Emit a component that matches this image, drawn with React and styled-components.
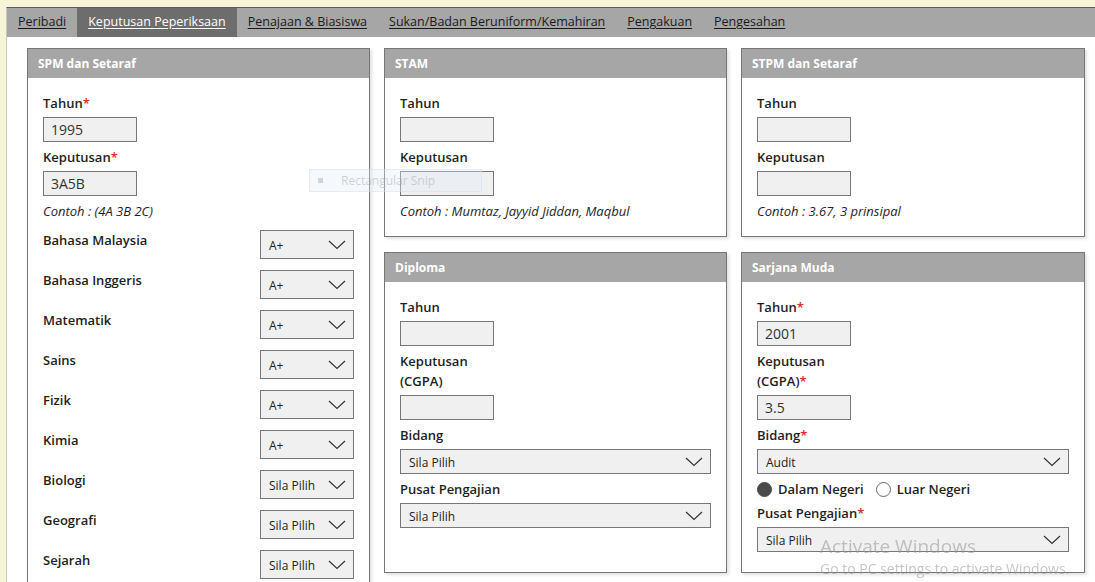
import React from 'react';
import styled, { createGlobalStyle } from 'styled-components';

const GlobalStyle = createGlobalStyle`
    html, body {
        margin: 0;
        padding: 0;
        background: #f7f5d8;
        overflow: hidden;
        font-family: "Open Sans", "Liberation Sans", sans-serif;
    }
`;

const tabs = [
    'Peribadi',
    'Keputusan Peperiksaan',
    'Penajaan & Biasiswa',
    'Sukan/Badan Beruniform/Kemahiran',
    'Pengakuan',
    'Pengesahan',
];

const subjects = [
    ['Bahasa Malaysia', 'A+'],
    ['Bahasa Inggeris', 'A+'],
    ['Matematik', 'A+'],
    ['Sains', 'A+'],
    ['Fizik', 'A+'],
    ['Kimia', 'A+'],
    ['Biologi', 'Sila Pilih'],
    ['Geografi', 'Sila Pilih'],
    ['Sejarah', 'Sila Pilih'],
];

const Chevron = () => (
    <svg width="18" height="10" viewBox="0 0 18 10">
        <polyline points="1,1 9,8.5 17,1" fill="none" stroke="#333" strokeWidth="1.2" />
    </svg>
);

const Select = ({ value, wide }) => (
    <SelectBox $wide={wide}>
        <span>{value}</span>
        <Chevron />
    </SelectBox>
);

const Label = ({ children, required }) => (
    <FieldLabel>
        {children}
        {required && <Star>*</Star>}
    </FieldLabel>
);

const App = () => {
    return (
        <>
            <GlobalStyle />
            <Frame>
                <TabBar>
                    {tabs.map((t, i) => (
                        <Tab key={t} $active={i === 1}>{t}</Tab>
                    ))}
                </TabBar>
                <Content>
                    <Panel $width="343px">
                        <PanelHeader>SPM dan Setaraf</PanelHeader>
                        <PanelBody>
                            <Label required>Tahun</Label>
                            <TextInput readOnly value="1995" />
                            <Label required>Keputusan</Label>
                            <TextInput readOnly value="3A5B" />
                            <Hint>Contoh : (4A 3B 2C)</Hint>
                            <SubjectList>
                                {subjects.map(([name, grade]) => (
                                    <SubjectRow key={name}>
                                        <FieldLabel>{name}</FieldLabel>
                                        <Select value={grade} />
                                    </SubjectRow>
                                ))}
                            </SubjectList>
                        </PanelBody>
                    </Panel>

                    <RightGrid>
                        <Panel>
                            <PanelHeader>STAM</PanelHeader>
                            <PanelBody>
                                <Label>Tahun</Label>
                                <TextInput readOnly value="" />
                                <Label>Keputusan</Label>
                                <TextInput readOnly value="" />
                                <Hint>Contoh : Mumtaz, Jayyid Jiddan, Maqbul</Hint>
                            </PanelBody>
                        </Panel>
                        <Panel>
                            <PanelHeader>STPM dan Setaraf</PanelHeader>
                            <PanelBody>
                                <Label>Tahun</Label>
                                <TextInput readOnly value="" />
                                <Label>Keputusan</Label>
                                <TextInput readOnly value="" />
                                <Hint>Contoh : 3.67, 3 prinsipal</Hint>
                            </PanelBody>
                        </Panel>
                        <Panel>
                            <PanelHeader>Diploma</PanelHeader>
                            <PanelBody>
                                <Label>Tahun</Label>
                                <TextInput readOnly value="" />
                                <Label>Keputusan<br />(CGPA)</Label>
                                <TextInput readOnly value="" />
                                <Label>Bidang</Label>
                                <Select wide value="Sila Pilih" />
                                <Label>Pusat Pengajian</Label>
                                <Select wide value="Sila Pilih" />
                            </PanelBody>
                        </Panel>
                        <Panel>
                            <PanelHeader>Sarjana Muda</PanelHeader>
                            <PanelBody>
                                <Label required>Tahun</Label>
                                <TextInput readOnly value="2001" />
                                <Label required>Keputusan<br />(CGPA)</Label>
                                <TextInput readOnly value="3.5" />
                                <Label required>Bidang</Label>
                                <Select wide value="Audit" />
                                <RadioRow>
                                    <RadioOption>
                                        <RadioDot $checked />
                                        Dalam Negeri
                                    </RadioOption>
                                    <RadioOption>
                                        <RadioDot />
                                        Luar Negeri
                                    </RadioOption>
                                </RadioRow>
                                <Label required>Pusat Pengajian</Label>
                                <Select wide value="Sila Pilih" />
                            </PanelBody>
                        </Panel>
                    </RightGrid>
                </Content>
            </Frame>

            <SnipGhost>
                <span className="icon" />
                <span>Rectangular Snip</span>
            </SnipGhost>

            <Watermark>
                <div className="big">Activate Windows</div>
                <div className="small">Go to PC settings to activate Windows.</div>
            </Watermark>
        </>
    );
};

export default App;

const Frame = styled.div`
    margin: 7px 0 0 6px;
    min-height: 600px;
    background: #fff;
    border-top: 1px solid #5c5c5c;
    border-left: 1px solid #c9c9c2;
`;

const TabBar = styled.div`
    display: flex;
    height: 29px;
    background: #a6a6a6;
`;

const Tab = styled.a`
    display: block;
    padding: 0 11px;
    line-height: 28px;
    font-size: 12.5px;
    color: ${({ $active }) => ($active ? '#fff' : '#1a1a1a')};
    background: ${({ $active }) => ($active ? '#6d6d6d' : 'transparent')};
    text-decoration: underline;
    text-underline-offset: 2px;
    cursor: pointer;
`;

const Content = styled.div`
    display: flex;
    align-items: flex-start;
    gap: 14px;
    padding: 11px 0 0 20px;
`;

const RightGrid = styled.div`
    display: grid;
    grid-template-columns: 343px 344px;
    column-gap: 14px;
    row-gap: 15px;
`;

const Panel = styled.div`
    box-sizing: border-box;
    width: ${({ $width }) => $width || 'auto'};
    background: #fff;
    border: 1px solid #767676;
    box-shadow: 2px 2px 3px rgba(0, 0, 0, 0.12);
`;

const PanelHeader = styled.div`
    height: 29px;
    line-height: 29px;
    padding-left: 10px;
    background: #a6a6a6;
    color: #fff;
    font-size: 12px;
    font-weight: 700;
`;

const PanelBody = styled.div`
    padding: 15px;
`;

const FieldLabel = styled.div`
    font-size: 13px;
    font-weight: 600;
    line-height: 20px;
    color: #1e1e1e;
    margin-bottom: 4px;
`;

const Star = styled.span`
    color: #e0282a;
`;

const TextInput = styled.input`
    display: block;
    box-sizing: border-box;
    width: 94px;
    height: 25px;
    margin: 0 0 5px;
    padding: 0 7px;
    border: 1px solid #777;
    border-radius: 0;
    background: #f0f0f0;
    font-family: "Open Sans", "Liberation Sans", sans-serif;
    font-size: 14px;
    color: #333;
    outline: none;
`;

const Hint = styled.div`
    font-size: 13px;
    font-style: italic;
    line-height: 20px;
    color: #1e1e1e;
`;

const SubjectList = styled.div`
    margin-top: 9px;
`;

const SubjectRow = styled.div`
    display: flex;
    justify-content: space-between;
    align-items: flex-start;
    height: 30px;
    margin-bottom: 10px;
`;

const SelectBox = styled.div`
    box-sizing: border-box;
    display: flex;
    align-items: center;
    justify-content: space-between;
    width: ${({ $wide }) => ($wide ? '100%' : '94px')};
    height: ${({ $wide }) => ($wide ? '25px' : '29px')};
    margin-bottom: ${({ $wide }) => ($wide ? '5px' : '0')};
    padding: 0 7px 0 8px;
    border: 1px solid #777;
    background: #f0f0f0;
    font-size: 12px;
    color: #222;

    span {
        padding-top: 2px;
    }

    svg {
        flex: none;
    }
`;

const RadioRow = styled.div`
    display: flex;
    align-items: center;
    gap: 12px;
    height: 20px;
    margin-bottom: 4px;
`;

const RadioOption = styled.div`
    display: flex;
    align-items: center;
    gap: 6px;
    font-size: 13px;
    font-weight: 600;
    color: #1e1e1e;
`;

const RadioDot = styled.span`
    box-sizing: border-box;
    width: 15px;
    height: 15px;
    border-radius: 50%;
    border: 1px solid ${({ $checked }) => ($checked ? '#4a4a4a' : '#6a6a6a')};
    background: ${({ $checked }) => ($checked ? '#4a4a4a' : '#fff')};
`;

const SnipGhost = styled.div`
    position: absolute;
    left: 309px;
    top: 169px;
    width: 173px;
    height: 23px;
    display: flex;
    align-items: center;
    gap: 18px;
    padding-left: 8px;
    box-sizing: border-box;
    background: rgba(225, 235, 245, 0.35);
    border: 1px solid rgba(200, 215, 230, 0.35);
    font-size: 12px;
    color: rgba(150, 160, 170, 0.45);

    .icon {
        width: 5px;
        height: 5px;
        background: rgba(150, 160, 170, 0.4);
    }
`;

const Watermark = styled.div`
    position: fixed;
    left: 820px;
    top: 534px;
    color: rgba(150, 150, 150, 0.55);
    pointer-events: none;
    white-space: nowrap;

    .big {
        font-size: 19px;
        line-height: 24px;
    }

    .small {
        font-size: 14px;
        line-height: 20px;
        margin-top: 1px;
    }
`;
